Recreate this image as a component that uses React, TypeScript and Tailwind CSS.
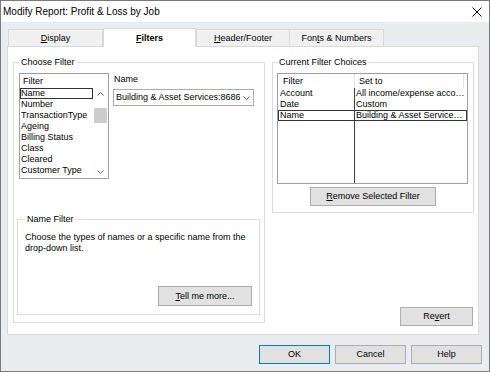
import React from "react";

const Btn = ({ children, className = "" }: { children: React.ReactNode; className?: string }) => (
  <button className={`flex items-center justify-center bg-[#e1e1e1] border text-[9px] leading-[11px] text-black ${className}`}>
    {children}
  </button>
);

const Chevron = ({ up = false }: { up?: boolean }) => (
  <svg width="7" height="4" viewBox="0 0 7 4">
    <polyline
      points={up ? "0.5,3.5 3.5,0.5 6.5,3.5" : "0.5,0.5 3.5,3.5 6.5,0.5"}
      fill="none"
      stroke="#606060"
      strokeWidth="1"
    />
  </svg>
);

const filterItems = ["Name", "Number", "TransactionType", "Ageing", "Billing Status", "Class", "Cleared", "Customer Type"];

const choices = [
  { f: "Account", v: "All income/expense acco…" },
  { f: "Date", v: "Custom" },
  { f: "Name", v: "Building & Asset Service…", sel: true },
];

export default function App() {
  return (
    <div className="w-[490px] h-[372px] border border-[#7a7a7a] bg-[#e9edf0] flex flex-col overflow-hidden font-['Liberation_Sans',Arial,sans-serif] text-[9px] leading-[11px] text-black">
      {/* title bar */}
      <div className="h-[21px] shrink-0 bg-white flex items-center justify-between pl-[2px] pr-[7px]">
        <span className="text-[10px]">Modify Report: Profit &amp; Loss by Job</span>
        <svg width="10" height="10" viewBox="0 0 10 10">
          <path d="M0.5 0.5 L9.5 9.5 M9.5 0.5 L0.5 9.5" stroke="#000" strokeWidth="1" />
        </svg>
      </div>

      <div className="flex flex-col pl-[6px] pr-[7px] pt-[5px]">
        {/* tabs */}
        <div className="flex items-end h-[19px] pl-[1px]">
          <div className="w-[95px] h-[17px] bg-[#f0f0f0] border-t border-x border-[#d9d9d9] flex items-center justify-center">
            <span><u>D</u>isplay</span>
          </div>
          <div className="w-[93px] h-[19px] -mb-px relative z-10 bg-white border-t border-x border-[#d9d9d9] flex items-center justify-center font-bold">
            <span><u>F</u>ilters</span>
          </div>
          <div className="w-[94px] h-[17px] bg-[#f0f0f0] border-t border-x border-[#d9d9d9] flex items-center justify-center">
            <span><u>H</u>eader/Footer</span>
          </div>
          <div className="w-[94px] h-[17px] bg-[#f0f0f0] border-t border-r border-[#d9d9d9] flex items-center justify-center">
            <span>Fon<u>t</u>s &amp; Numbers</span>
          </div>
        </div>

        {/* panel */}
        <div className="w-[472px] h-[289px] bg-white border border-[#d9d9d9] flex pt-[10px] pl-[5px] gap-[7px]">
          {/* choose filter */}
          <fieldset className="w-[252px] h-[266px] border border-[#dcdcdc] px-[3px] pb-[7px]">
            <legend className="ml-[2px] px-[2px]">Choose Filter</legend>
            <div className="flex mt-[5px]">
              <div className="ml-[2px] w-[90px] h-[106px] border border-[#a0a0a0] bg-white flex flex-col">
                <div className="h-[14px] pl-[3px] flex items-center">Filter</div>
                <div className="flex flex-1">
                  <div className="flex-1 flex flex-col">
                    {filterItems.map((it, i) => (
                      <div
                        key={it}
                        className={`h-[11px] pl-[1px] whitespace-nowrap ${i === 0 ? "outline outline-1 outline-[#333] -outline-offset-1" : ""}`}
                      >
                        {it}
                      </div>
                    ))}
                  </div>
                  <div className="w-[15px] flex flex-col items-center">
                    <div className="h-[12px] flex items-center justify-center">
                      <Chevron up />
                    </div>
                    <div className="mt-[8px] w-[13px] h-[15px] bg-[#cdcdcd]" />
                    <div className="mt-auto h-[12px] flex items-center justify-center">
                      <Chevron />
                    </div>
                  </div>
                </div>
              </div>
              <div className="ml-[4px] flex flex-col">
                <div className="mt-px pl-px h-[11px]">Name</div>
                <div className="mt-[4px] w-[141px] h-[17px] border border-[#acacac] bg-white flex items-center">
                  <div className="flex-1 overflow-hidden whitespace-nowrap pl-[2px]">Building &amp; Asset Services:8686 - Main</div>
                  <div className="w-[13px] flex items-center justify-center">
                    <Chevron />
                  </div>
                </div>
              </div>
            </div>

            <fieldset className="mt-[35px] w-[243px] h-[101px] border border-[#dcdcdc] px-[7px]">
              <legend className="px-[2px]">Name Filter</legend>
              <p className="mt-[7px]">Choose the types of names or a specific name from the drop-down list.</p>
              <div className="flex justify-end mt-[32px]">
                <Btn className="w-[94px] h-[20px] border-[#adadad]">
                  <span><u>T</u>ell me more...</span>
                </Btn>
              </div>
            </fieldset>
          </fieldset>

          {/* current filter choices */}
          <div className="w-[202px] flex flex-col">
            <fieldset className="border border-[#dcdcdc] px-[4px] pb-[6px]">
              <legend className="px-[2px]">Current Filter Choices</legend>
              <div className="mt-[5px] w-[191px] h-[111px] border border-[#a0a0a0] bg-white flex flex-col">
                <div className="h-[14px] flex">
                  <div className="w-[76px] pl-[5px] flex items-center">Filter</div>
                  <div className="w-[109px] border-l border-[#e5e5e5] pl-[4px] flex items-center">Set to</div>
                  <div className="border-l border-[#e5e5e5]" />
                </div>
                {choices.map((c) => (
                  <div
                    key={c.f}
                    className={`h-[11px] flex ${c.sel ? "outline outline-1 outline-[#333] -outline-offset-1" : ""}`}
                  >
                    <div className="w-[76px] pl-[2px] whitespace-nowrap">{c.f}</div>
                    <div className="flex-1 border-l border-[#404040] pl-[1px] whitespace-nowrap overflow-hidden">{c.v}</div>
                  </div>
                ))}
                <div className="flex-1 flex">
                  <div className="w-[76px]" />
                  <div className="flex-1 border-l border-[#404040]" />
                </div>
              </div>
              <div className="flex justify-center mt-[3px]">
                <Btn className="w-[126px] h-[19px] border-[#adadad]">
                  <span><u>R</u>emove Selected Filter</span>
                </Btn>
              </div>
            </fieldset>
            <div className="mt-auto mb-[8px] mr-px flex justify-end">
              <Btn className="w-[73px] h-[19px] border-[#adadad]">
                <span>Re<u>v</u>ert</span>
              </Btn>
            </div>
          </div>
        </div>

        {/* dialog buttons */}
        <div className="flex justify-end gap-[5px] mt-[10px]">
          <Btn className="w-[71px] h-[19px] border-[#0078d7]">OK</Btn>
          <Btn className="w-[71px] h-[19px] border-[#adadad]">Cancel</Btn>
          <Btn className="w-[71px] h-[19px] border-[#adadad]">Help</Btn>
        </div>
      </div>
    </div>
  );
}
